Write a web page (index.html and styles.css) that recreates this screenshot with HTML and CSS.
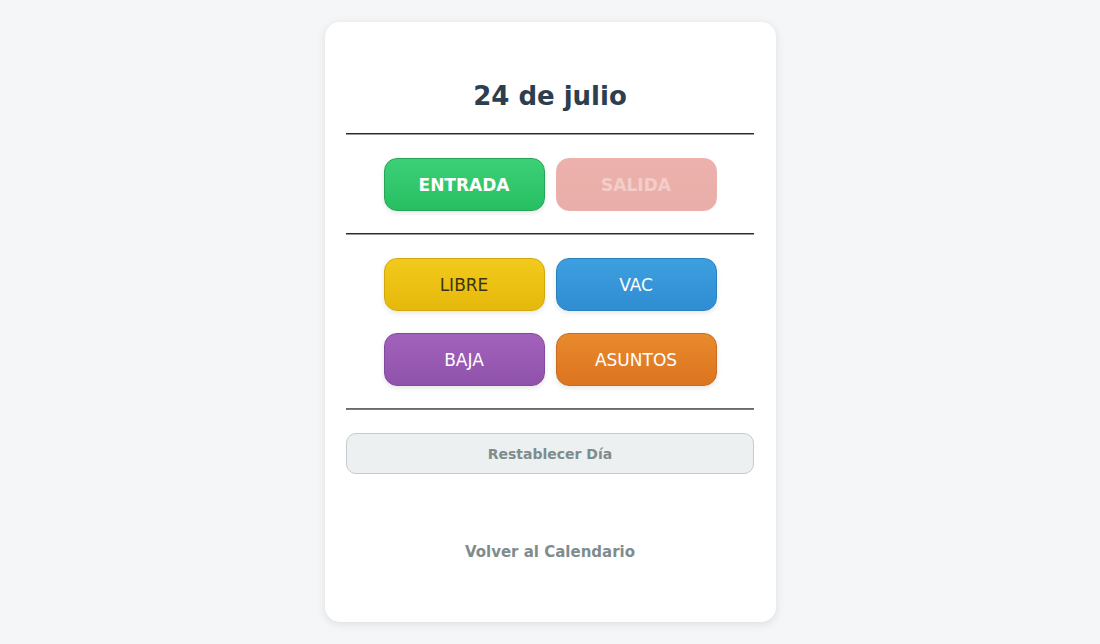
FILE: index.html
```html
<!DOCTYPE html>
<html lang="es">
<head>
<meta charset="utf-8">
<title>24 de julio</title>
<link rel="stylesheet" href="styles.css">
</head>
<body>
<main class="card">
  <h2 class="title">24 de julio</h2>
  <hr class="sep">
  <div class="row">
    <button class="btn btn-entrada">ENTRADA</button>
    <button class="btn btn-salida" disabled>SALIDA</button>
  </div>
  <hr class="sep">
  <div class="grid">
    <button class="btn btn-type btn-libre">LIBRE</button>
    <button class="btn btn-type btn-vac">VAC</button>
    <button class="btn btn-type btn-baja">BAJA</button>
    <button class="btn btn-type btn-asuntos">ASUNTOS</button>
  </div>
  <hr class="sep sep-light">
  <button class="reset">Restablecer Día</button>
  <a class="back" href="#">Volver al Calendario</a>
</main>
</body>
</html>
```
FILE: styles.css
```css
* { box-sizing: border-box; }
html, body { margin: 0; padding: 0; }
body {
  background: #f4f6f8;
  font-family: "DejaVu Sans", Verdana, sans-serif;
  height: 644px;
  overflow: hidden;
}
.card {
  width: 451px;
  height: 600px;
  margin: 22px auto 0;
  padding: 0 21.5px;
  background: #fff;
  border-radius: 15px;
  box-shadow: 0 2px 10px rgba(0,0,0,0.10);
  display: flex;
  flex-direction: column;
}
.title {
  margin: 59px 0 0;
  height: 30px;
  line-height: 30px;
  font-size: 26px;
  font-weight: bold;
  color: #2c3e50;
  text-align: center;
}
.sep {
  margin: 22px 0 0;
  border: none;
  border-top: 1px solid #2a2a2a;
  border-bottom: 1px solid #9a9a9a;
  height: 2px;
}
.sep-light {
  border-top: 1px solid #6a6a6a;
  border-bottom: 1px solid #7a7a7a;
}
.row, .grid {
  margin-top: 23px;
  display: grid;
  grid-template-columns: 161px 161px;
  column-gap: 11px;
  row-gap: 22px;
  justify-content: center;
}
.btn {
  height: 53px;
  border-radius: 13px;
  font-family: "DejaVu Sans", Verdana, sans-serif;
  font-size: 17px;
  color: #fff;
  border: 1px solid rgba(0,0,0,0.14);
  box-shadow: 0 2px 5px rgba(0,0,0,0.10);
  padding: 0;
  cursor: pointer;
}
.btn-entrada {
  font-weight: bold;
  background: linear-gradient(to bottom, #3dd077, #27bf62);
  border-color: #25a458;
}
.btn-salida {
  font-weight: bold;
  background: linear-gradient(to bottom, #d6473c, #cc4036);
  border-color: #d6473c;
  opacity: 0.42;
  box-shadow: none;
  color: #e68a80;
}
.btn-libre {
  background: linear-gradient(to bottom, #f2c91c, #e5b90c);
  border-color: #d0a80e;
  color: #3b3413;
}
.btn-vac {
  background: linear-gradient(to bottom, #3d9fe0, #2f8dd2);
  border-color: #2a7fbd;
}
.btn-baja {
  background: linear-gradient(to bottom, #a262bc, #8f52ab);
  border-color: #8149a0;
}
.btn-asuntos {
  background: linear-gradient(to bottom, #e98a2c, #dc7420);
  border-color: #c96c1e;
}
.reset {
  margin-top: 23px;
  height: 41px;
  width: 100%;
  background: #ecf0f1;
  border: 1px solid #c6cbcd;
  border-radius: 10px;
  color: #7f8c8d;
  font-family: "DejaVu Sans", Verdana, sans-serif;
  font-size: 14px;
  font-weight: bold;
  padding: 0;
}
.back {
  margin-top: 68px;
  line-height: 20px;
  text-align: center;
  font-size: 15px;
  font-weight: bold;
  color: #7f8c8d;
  text-decoration: none;
}
```
